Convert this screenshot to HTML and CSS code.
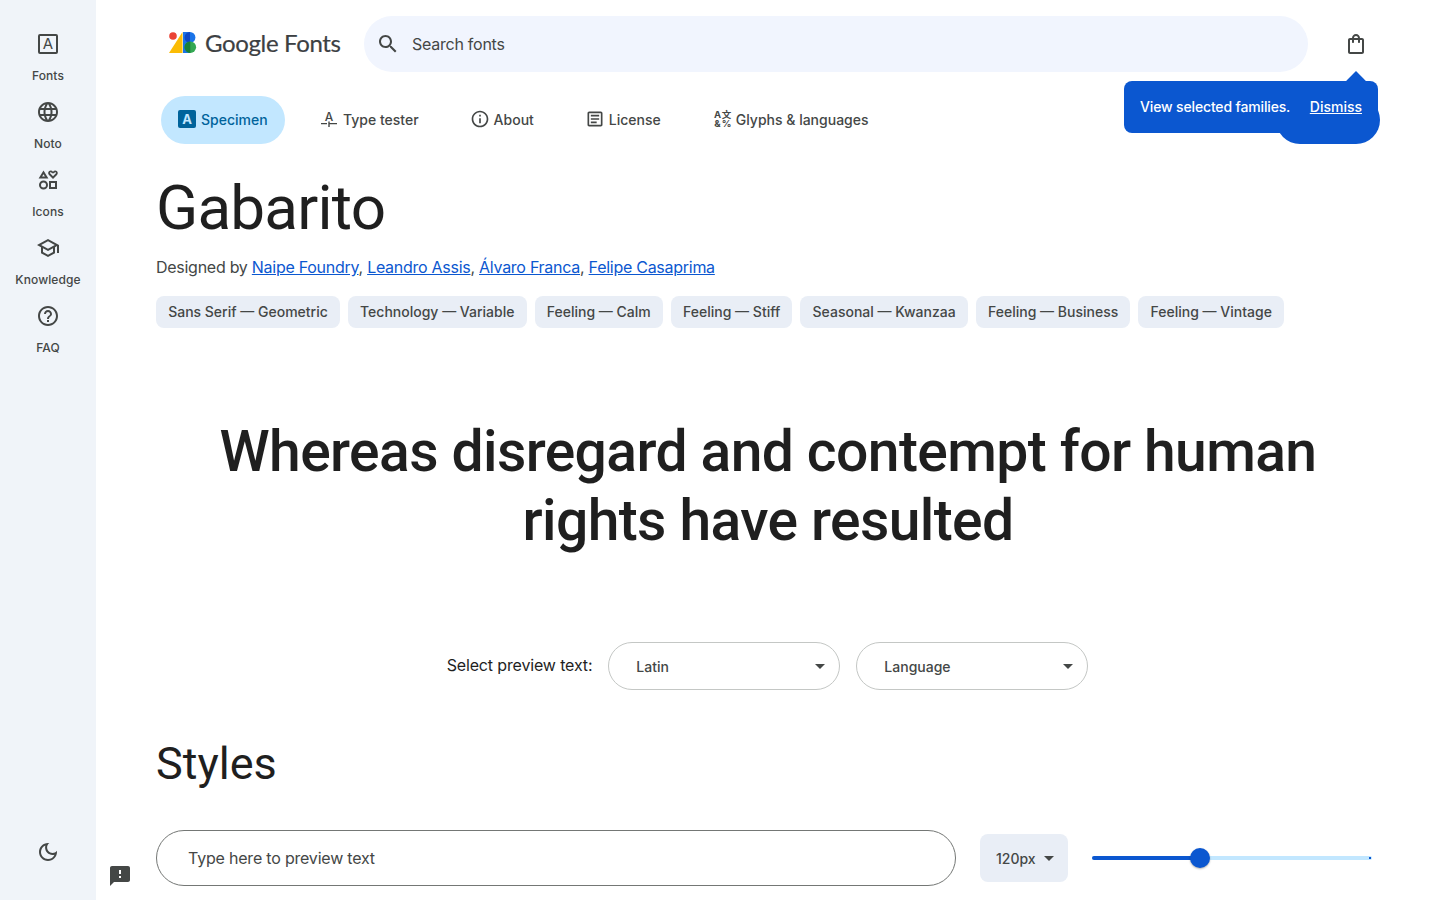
FILE: index.html
```html
<!DOCTYPE html>
<html lang="en">
<head>
    <meta charset="UTF-8">
    <meta name="viewport" content="width=device-width, initial-scale=1.0">
    <title>Gabarito - Google Fonts</title>
    <link rel="stylesheet" href="styles.css">
</head>
<body>
    <div class="page">
        <nav class="rail">
            <a class="railItem">
                <span class="boxA">A</span>
                <span class="railLabel">Fonts</span>
            </a>
            <a class="railItem">
                <svg class="icon24" viewBox="0 0 24 24"><path d="M11.99 2C6.47 2 2 6.48 2 12s4.47 10 9.99 10C17.52 22 22 17.52 22 12S17.52 2 11.99 2zm6.93 6h-2.95c-.32-1.25-.78-2.45-1.38-3.56 1.84.63 3.37 1.91 4.33 3.56zM12 4.04c.83 1.2 1.48 2.53 1.91 3.96h-3.82c.43-1.43 1.08-2.76 1.91-3.96zM4.26 14C4.1 13.36 4 12.69 4 12s.1-1.36.26-2h3.38c-.08.66-.14 1.32-.14 2 0 .68.06 1.34.14 2H4.26zm.82 2h2.95c.32 1.25.78 2.45 1.38 3.56-1.84-.63-3.37-1.9-4.33-3.56zm2.95-8H5.08c.96-1.66 2.49-2.93 4.33-3.56C8.81 5.55 8.35 6.75 8.03 8zM12 19.96c-.83-1.2-1.48-2.53-1.91-3.96h3.82c-.43 1.43-1.08 2.76-1.91 3.96zM14.34 14H9.66c-.09-.66-.16-1.32-.16-2 0-.68.07-1.35.16-2h4.68c.09.65.16 1.32.16 2 0 .68-.07 1.34-.16 2zm.25 5.56c.6-1.11 1.06-2.31 1.38-3.56h2.95c-.96 1.65-2.49 2.93-4.33 3.56zM16.36 14c.08-.66.14-1.32.14-2 0-.68-.06-1.34-.14-2h3.38c.16.64.26 1.31.26 2s-.1 1.36-.26 2h-3.38z"/></svg>
                <span class="railLabel">Noto</span>
            </a>
            <a class="railItem">
                <svg class="icon24" viewBox="0 0 24 24"><path d="M7.5 2.5 2.6 10.5h9.8zM7.5 6.3l1.4 2.3H6.1z" fill-rule="evenodd"/><path d="M17 11l-4-4c-1.6-1.6-.6-4.5 1.7-4.5.9 0 1.7.4 2.3 1.2.6-.8 1.4-1.2 2.3-1.2 2.3 0 3.3 2.9 1.7 4.5zM17 8.3l2.7-2.7c.6-.6.3-1.3-.4-1.3-.5 0-.9.3-1.3.9h-2c-.4-.6-.8-.9-1.3-.9-.7 0-1 .7-.4 1.3z" fill-rule="evenodd"/><path d="M7.5 12.5a4.5 4.5 0 1 0 0 9 4.5 4.5 0 0 0 0-9zm0 2a2.5 2.5 0 1 1 0 5 2.5 2.5 0 0 1 0-5z" fill-rule="evenodd"/><path d="M13 13h8v8h-8zm2 2v4h4v-4z" fill-rule="evenodd"/></svg>
                <span class="railLabel">Icons</span>
            </a>
            <a class="railItem">
                <svg class="icon24" viewBox="0 0 24 24"><path d="M12 3L1 9l4 2.18v6L12 21l7-3.82v-6l2-1.09V17h2V9L12 3zm6.82 6L12 12.72 5.18 9 12 5.28 18.82 9zM17 15.99l-5 2.73-5-2.73v-3.72L12 15l5-2.73v3.72z"/></svg>
                <span class="railLabel">Knowledge</span>
            </a>
            <a class="railItem">
                <svg class="icon24" viewBox="0 0 24 24"><path d="M11 18h2v-2h-2v2zm1-16C6.48 2 2 6.48 2 12s4.48 10 10 10 10-4.48 10-10S17.52 2 12 2zm0 18c-4.41 0-8-3.59-8-8s3.59-8 8-8 8 3.59 8 8-3.59 8-8 8zm0-14c-2.21 0-4 1.79-4 4h2c0-1.1.9-2 2-2s2 .9 2 2c0 2-3 1.75-3 5h2c0-2.25 3-2.5 3-5 0-2.21-1.79-4-4-4z"/></svg>
                <span class="railLabel">FAQ</span>
            </a>
            <a class="railMoon">
                <svg class="icon24" viewBox="0 0 24 24"><path d="M9.37 5.51c-.18.64-.27 1.31-.27 1.99 0 4.08 3.32 7.4 7.4 7.4.68 0 1.35-.09 1.99-.27C17.45 17.19 14.93 19 12 19c-3.86 0-7-3.14-7-7 0-2.93 1.81-5.45 4.37-6.49zM12 3c-4.97 0-9 4.03-9 9s4.03 9 9 9 9-4.03 9-9c0-.46-.04-.92-.1-1.36-.98 1.37-2.58 2.26-4.4 2.26-2.98 0-5.4-2.42-5.4-5.4 0-1.81.89-3.42 2.26-4.4-.44-.06-.9-.1-1.36-.1z"/></svg>
            </a>
        </nav>

        <main class="content">
            <header class="topBar">
                <a class="logo">
                    <svg class="logoMark" viewBox="0 0 28 22">
                        <path fill="#fbbc04" d="M0 21 13.5 0v21z"/>
                        <circle fill="#ea4335" cx="4" cy="4" r="3.8"/>
                        <path fill="#1a73e8" d="M14 0h7v21h-7z"/>
                        <path fill="#1a73e8" d="M21 0a5.4 5.4 0 0 1 0 10.8z"/>
                        <path fill="#0d47c4" d="M21 0a5.4 5.4 0 0 0 0 10.8z"/>
                        <circle fill="#34a853" cx="21.3" cy="15.2" r="5.8"/>
                        <path fill="#188038" d="M21.3 9.4a5.8 5.8 0 0 0 0 11.6z"/>
                    </svg>
                    <span class="logoText">Google Fonts</span>
                </a>
                <div class="search">
                    <svg class="icon24" viewBox="0 0 24 24"><path d="M15.5 14h-.79l-.28-.27C15.41 12.59 16 11.11 16 9.5 16 5.91 13.09 3 9.5 3S3 5.91 3 9.5 5.91 16 9.5 16c1.61 0 3.09-.59 4.23-1.57l.27.28v.79l5 4.99L20.49 19l-4.99-5zm-6 0C7.01 14 5 11.99 5 9.5S7.01 5 9.5 5 14 7.01 14 9.5 11.99 14 9.5 14z"/></svg>
                    <span class="searchText">Search fonts</span>
                </div>
                <svg class="icon24 bag" viewBox="0 0 24 24"><path d="M18 6h-2c0-2.21-1.79-4-4-4S8 3.79 8 6H6c-1.1 0-2 .9-2 2v12c0 1.1.9 2 2 2h12c1.1 0 2-.9 2-2V8c0-1.1-.9-2-2-2zm-6-2c1.1 0 2 .9 2 2h-4c0-1.1.9-2 2-2zm6 16H6V8h2v2c0 .55.45 1 1 1s1-.45 1-1V8h4v2c0 .55.45 1 1 1s1-.45 1-1V8h2v12z"/></svg>
            </header>

            <div class="tabs">
                <a class="tab active"><span class="specimenA">A</span>Specimen</a>
                <a class="tab">
                    <svg class="icon20" viewBox="0 0 20 20"><text x="10" y="11.5" text-anchor="middle" class="typeA">A</text><path d="M2 14h6v1.3H2zM12 14h6v1.3h-6zM9.3 12.5h1.4v5.5H9.3zM10 14h2v1.3h-2z"/></svg>
                    Type tester
                </a>
                <a class="tab">
                    <svg class="icon20" viewBox="0 0 24 24"><path d="M11 7h2v2h-2zm0 4h2v6h-2zm1-9C6.48 2 2 6.48 2 12s4.48 10 10 10 10-4.48 10-10S17.52 2 12 2zm0 18c-4.41 0-8-3.59-8-8s3.59-8 8-8 8 3.59 8 8-3.59 8-8 8z"/></svg>
                    About
                </a>
                <a class="tab">
                    <svg class="icon20" viewBox="0 0 24 24"><path d="M19 5v14H5V5h14m0-2H5c-1.1 0-2 .9-2 2v14c0 1.1.9 2 2 2h14c1.1 0 2-.9 2-2V5c0-1.1-.9-2-2-2z"/><path d="M14 17H7v-2h7v2zm3-4H7v-2h10v2zm0-4H7V7h10v2z"/></svg>
                    License
                </a>
                <a class="tab">
                    <svg class="icon20" viewBox="0 0 20 20"><text class="glyphMini" x="5.5" y="9">A</text><text class="glyphMini" x="14.5" y="9">文</text><text class="glyphMini" x="5.5" y="18">&amp;</text><text class="glyphMini" x="14.5" y="18">%</text></svg>
                    Glyphs &amp; languages
                </a>
            </div>

            <h1 class="fontName">Gabarito</h1>
            <p class="designers">Designed by <a>Naipe Foundry</a>, <a>Leandro Assis</a>, <a>Álvaro Franca</a>, <a>Felipe Casaprima</a></p>
            <div class="tags">
                <span class="tag">Sans Serif — Geometric</span>
                <span class="tag">Technology — Variable</span>
                <span class="tag">Feeling — Calm</span>
                <span class="tag">Feeling — Stiff</span>
                <span class="tag">Seasonal — Kwanzaa</span>
                <span class="tag">Feeling — Business</span>
                <span class="tag">Feeling — Vintage</span>
            </div>

            <p class="specimen">Whereas disregard and contempt for human rights have resulted</p>

            <div class="previewSelect">
                <span class="previewLabel">Select preview text:</span>
                <div class="dropdown"><span>Latin</span><i class="caret"></i></div>
                <div class="dropdown"><span>Language</span><i class="caret"></i></div>
            </div>

            <h2 class="stylesTitle">Styles</h2>

            <div class="styleControls">
                <div class="previewInput">Type here to preview text</div>
                <div class="sizeBtn">120px<i class="caret small"></i></div>
                <div class="slider">
                    <div class="sliderFill"></div>
                    <div class="sliderThumb"></div>
                    <div class="sliderEnd"></div>
                </div>
            </div>
        </main>
    </div>

    <div class="bubble">
        <span class="bubbleText">View selected families.</span>
        <a>Dismiss</a>
    </div>
    <div class="bubbleBlob"></div>
    <div class="bubbleArrow"></div>

    <svg class="feedback" viewBox="0 0 24 24"><path d="M20 2H4c-1.1 0-1.99.9-1.99 2L2 22l4-4h14c1.1 0 2-.9 2-2V4c0-1.1-.9-2-2-2zm-7 12h-2v-2h2v2zm0-4h-2V6h2v4z"/></svg>
</body>
</html>
```

FILE: styles.css
```css
* {
    box-sizing: border-box;
}
html, body {
    margin: 0;
    height: 100%;
    overflow: hidden;
}
body {
    font-family: "Inter", "Roboto", sans-serif;
    color: #1f1f1f;
    background: #fff;
}
a {
    cursor: pointer;
}
.page {
    display: flex;
    height: 900px;
}

/* left rail */
.rail {
    width: 96px;
    flex-shrink: 0;
    background: #f0f4f9;
    display: flex;
    flex-direction: column;
    align-items: center;
    padding-top: 32px;
}
.railItem {
    display: flex;
    flex-direction: column;
    align-items: center;
    height: 68px;
}
.railLabel {
    font-size: 12px;
    font-weight: 500;
    line-height: 16px;
    letter-spacing: .1px;
    margin-top: 12px;
    color: #444746;
}
.railMoon {
    margin-top: auto;
    margin-bottom: 36px;
    height: 24px;
}
.icon24 {
    width: 24px;
    height: 24px;
    fill: #444746;
    display: block;
    flex-shrink: 0;
}
.icon20 {
    width: 20px;
    height: 20px;
    fill: #444746;
    flex-shrink: 0;
    overflow: visible;
}
.boxA {
    width: 20px;
    height: 20px;
    margin: 2px;
    border: 2px solid #444746;
    border-radius: 2px;
    font-size: 15px;
    font-weight: 400;
    line-height: 16px;
    text-align: center;
    color: #444746;
}

/* top */
.content {
    flex: 1;
    min-width: 0;
    padding: 16px 60px 0;
}
.topBar {
    display: flex;
    align-items: center;
    height: 56px;
}
.logo {
    display: flex;
    align-items: center;
    width: 208px;
    padding-left: 13px;
    flex-shrink: 0;
}
.logoMark {
    width: 28px;
    height: 22px;
    margin-top: -3px;
}
.logoText {
    font-family: "Lato", sans-serif;
    font-size: 24px;
    letter-spacing: -.35px;
    color: #3c4043;
    margin-left: 8px;
    margin-top: -3px;
    white-space: nowrap;
    -webkit-text-stroke: .2px #3c4043;
}
.search {
    flex: 0 0 944px;
    height: 56px;
    border-radius: 28px;
    background: #f1f5fe;
    display: flex;
    align-items: center;
    padding-left: 12px;
    gap: 12px;
}
.searchText {
    font-size: 16px;
    letter-spacing: -.25px;
    line-height: 54px;
    color: #444746;
}
.bag {
    margin-left: 36px;
}
.tabs {
    display: flex;
    align-items: center;
    gap: 3px;
    margin-top: 24px;
    margin-left: 5px;
    height: 48px;
}
.tab {
    display: flex;
    align-items: center;
    gap: 4px;
    height: 48px;
    padding: 0 16px 2px;
    margin-right: 16px;
    border-radius: 24px;
    font-size: 14px;
    font-weight: 500;
    color: #444746;
}
.tab.active {
    background: #c2e7ff;
    color: #00639b;
    margin-right: 15px;
    width: 124px;
    padding-left: 17px;
}
.specimenA {
    width: 18px;
    height: 18px;
    margin-right: 1px;
    border-radius: 2px;
    background: #00639b;
    color: #c2e7ff;
    text-align: center;
    font-size: 13px;
    font-weight: 700;
    line-height: 18px;
}
.typeA {
    font-size: 12px;
    font-weight: 500;
}
.glyphMini {
    font-size: 9.5px;
    font-weight: 700;
    text-anchor: middle;
    font-family: "Inter", "Noto Sans CJK SC", sans-serif;
}

/* heading block */
.fontName {
    font-family: "Roboto", sans-serif;
    font-size: 62px;
    font-weight: 400;
    letter-spacing: -.8px;
    line-height: 72px;
    margin: 28px 0 0;
}
.designers {
    font-size: 16px;
    line-height: 24px;
    letter-spacing: -.27px;
    margin: 11px 0 0;
    color: #444746;
}
.designers a {
    color: #0b57d0;
    text-decoration: underline;
}
.tags {
    display: flex;
    gap: 8px;
    margin-top: 17px;
}
.tag {
    height: 32px;
    padding: 0 12.15px;
    border-radius: 8px;
    background: #e9eef6;
    font-size: 14px;
    font-weight: 500;
    line-height: 32px;
    color: #444746;
    white-space: nowrap;
}

/* big preview */
.specimen {
    font-family: "Roboto", sans-serif;
    font-size: 57px;
    font-weight: 500;
    letter-spacing: -.6px;
    line-height: 69px;
    text-align: center;
    margin: 89px 0 0;
}
.previewSelect {
    display: flex;
    align-items: center;
    justify-content: center;
    gap: 16px;
    margin-top: 87px;
    padding-right: 1px;
}
.previewLabel {
    font-size: 16px;
    letter-spacing: -.15px;
    padding-bottom: 2px;
}
.dropdown {
    width: 232px;
    height: 48px;
    border: 1px solid #c4c7c5;
    border-radius: 24px;
    display: flex;
    align-items: center;
    justify-content: space-between;
    padding: 0 14px 0 27px;
    font-size: 14px;
    font-weight: 500;
    color: #444746;
}
.caret {
    width: 0;
    height: 0;
    border-left: 5px solid transparent;
    border-right: 5px solid transparent;
    border-top: 5px solid #444746;
}
.caret.small {
    margin-left: 8px;
}
.stylesTitle {
    font-family: "Roboto", sans-serif;
    font-size: 45px;
    font-weight: 400;
    line-height: 52px;
    margin: 48px 0 0;
}

/* style controls */
.styleControls {
    display: flex;
    align-items: center;
    margin-top: 40px;
}
.previewInput {
    width: 800px;
    height: 56px;
    border: 1px solid #747775;
    border-radius: 28px;
    padding-left: 31px;
    font-size: 16px;
    letter-spacing: -.2px;
    line-height: 54px;
    color: #444746;
}
.sizeBtn {
    display: flex;
    align-items: center;
    width: 88px;
    height: 48px;
    margin-left: 24px;
    padding-left: 16px;
    border-radius: 8px;
    background: #e9eef6;
    font-size: 14px;
    font-weight: 500;
    color: #444746;
}
.slider {
    position: relative;
    width: 280px;
    height: 4px;
    margin-left: 24px;
    border-radius: 2px;
    background: #c2e7ff;
}
.sliderFill {
    width: 108px;
    height: 4px;
    border-radius: 2px;
    background: #0b57d0;
}
.sliderThumb {
    position: absolute;
    left: 98px;
    top: -8px;
    width: 20px;
    height: 20px;
    border-radius: 50%;
    background: #0b57d0;
    box-shadow: 0 1px 2px rgba(0, 0, 0, .3);
}
.sliderEnd {
    position: absolute;
    right: 1px;
    top: 1px;
    width: 2px;
    height: 2px;
    background: #0b57d0;
}

/* overlays */
.bubble {
    position: absolute;
    left: 1124px;
    top: 81px;
    width: 254px;
    height: 52px;
    z-index: 2;
    display: flex;
    align-items: center;
    justify-content: space-between;
    padding: 0 16px 2px;
    border-radius: 8px;
    background: #0b57d0;
    color: #fff;
    font-size: 14px;
    font-weight: 500;
}
.bubbleText {
    letter-spacing: -.15px;
}
.bubble a {
    text-decoration: underline;
}
.bubbleBlob {
    position: absolute;
    left: 1276px;
    top: 96px;
    width: 104px;
    height: 48px;
    border-radius: 24px;
    background: #0b57d0;
}
.bubbleArrow {
    position: absolute;
    left: 1349px;
    top: 74px;
    width: 14px;
    height: 14px;
    background: #0b57d0;
    transform: rotate(45deg);
}
.feedback {
    position: absolute;
    left: 108px;
    top: 864px;
    width: 24px;
    height: 24px;
    fill: #444746;
}
```
